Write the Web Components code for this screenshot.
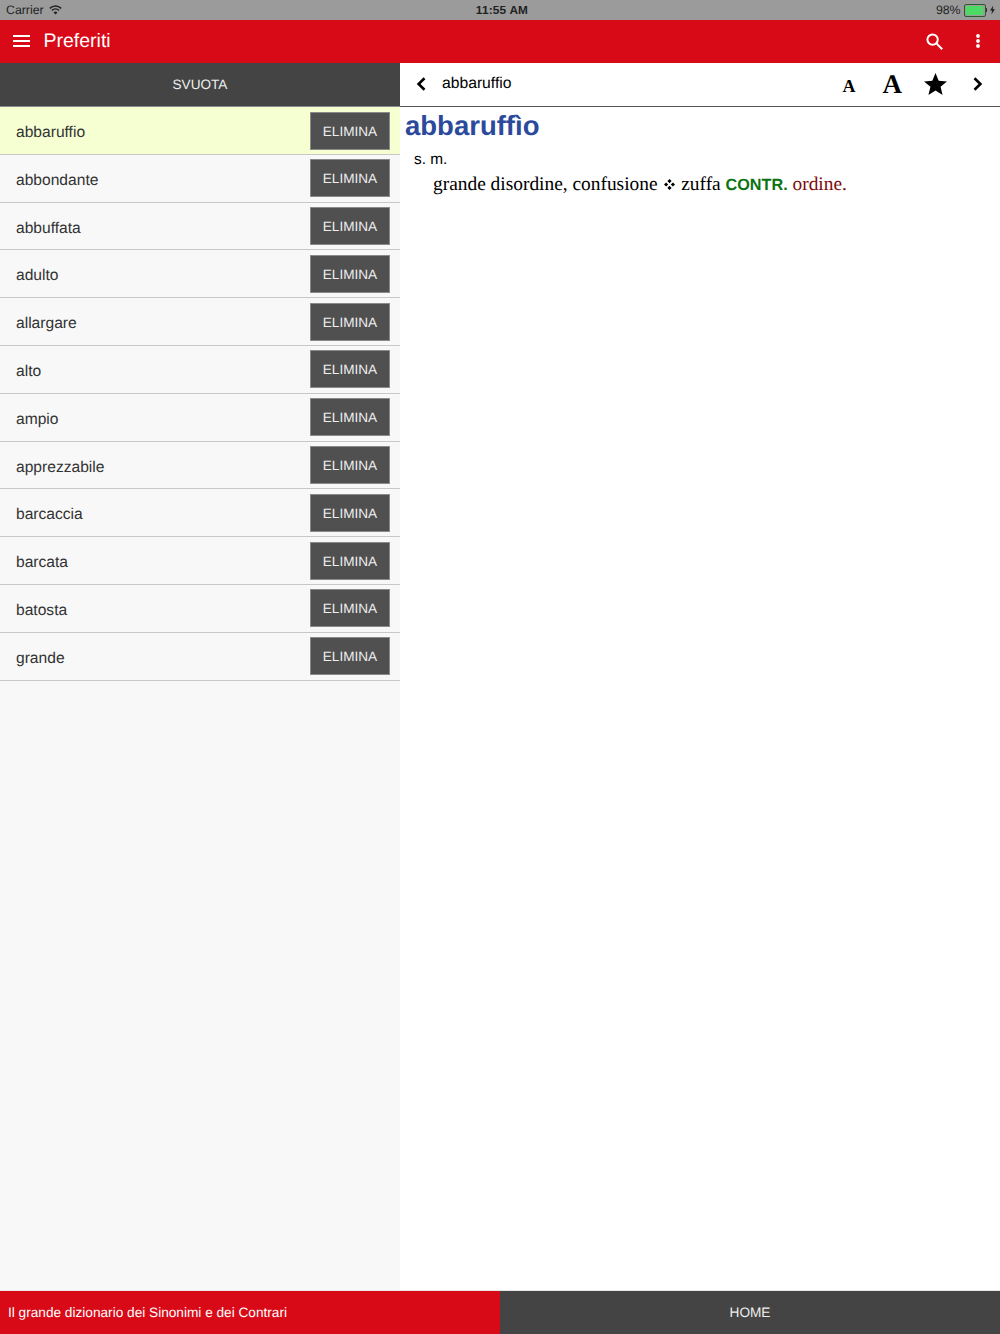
<!DOCTYPE html>
<html lang="it">
<head>
<meta charset="UTF-8">
<title>Preferiti</title>
<style>
  html, body { margin: 0; height: 100%; }
  body { font-family: "Liberation Sans", Arial, sans-serif; text-rendering: geometricPrecision; }
</style>
<script>
  function shadow(el, html) {
    el.attachShadow({ mode: 'open' }).innerHTML = html;
  }

  class StatusBar extends HTMLElement {
    connectedCallback() {
      shadow(this, `
        <style>
          :host { display: grid; grid-template-columns: 1fr auto 1fr; align-items: center; height: 20px; background: #9b9b9b; color: #222; font-size: 12.3px; padding: 0 5px 0 6px; box-sizing: border-box; }
          .l, .r { display: flex; align-items: center; }
          .l { gap: 5px; }
          .r { justify-content: flex-end; gap: 3px; }
          .t { font-weight: bold; font-size: 11.8px; letter-spacing: .2px; margin-left: 3px; }
          .bat { height: 9px; border: 1px solid #2c5a2c; border-radius: 2px; padding: 1px; box-sizing: content-box; display: block; width: 18px; }
          .bat i { display: block; height: 100%; width: 95%; background: #4cd964; border-radius: 1px; }
          .nub { width: 1.5px; height: 4px; background: #333; margin-left: -3px; }
        </style>
        <div class="l"><span>Carrier</span>
          <svg width="13" height="10" viewBox="0 0 13 10" fill="none" stroke="#222" stroke-width="1.5"><path d="M.8 3.4a8.2 8.2 0 0 1 11.4 0"/><path d="M2.9 5.5a5.2 5.2 0 0 1 7.2 0"/><path d="M6.5 9.6 4.5 7.4a2.8 2.8 0 0 1 4 0z" fill="#222" stroke="none"/></svg>
        </div>
        <div class="t">11:55 AM</div>
        <div class="r"><span>98%</span><span class="bat"><i></i></span><span class="nub"></span>
          <svg width="5" height="10" viewBox="0 0 6 10" fill="#222"><path d="M3.8 0 0 5.6h2.4L1.8 10 6 4.2H3.4z"/></svg>
        </div>`);
    }
  }
  customElements.define('status-bar', StatusBar);

  class AppToolbar extends HTMLElement {
    connectedCallback() {
      shadow(this, `
        <style>
          :host { display: flex; align-items: center; height: 43px; background: #d90a17; color: #fff; }
          .menu { margin-left: 13px; width: 17px; height: 14px; display: block; }
          h1 { margin: 0 0 0 13.5px; font-size: 19.5px; font-weight: normal; flex: 1; }
          .search { margin-right: 33px; }
          .more { margin-right: 20px; }
          svg { display: block; margin-bottom: 1px; }
        </style>
        <svg class="menu" viewBox="0 0 17 14" fill="#fff"><rect y="1" width="17" height="2"/><rect y="6" width="17" height="2"/><rect y="11" width="17" height="2"/></svg>
        <h1><slot></slot></h1>
        <svg class="search" width="17" height="17" viewBox="0 0 17 17" fill="none" stroke="#fff" stroke-width="2"><circle cx="6.6" cy="6.6" r="5.2"/><path d="m10.4 10.4 5.8 5.8"/></svg>
        <svg class="more" width="4" height="14" viewBox="0 0 4 14" fill="#fff"><circle cx="2" cy="2" r="1.9"/><circle cx="2" cy="7" r="1.9"/><circle cx="2" cy="12" r="1.9"/></svg>`);
    }
  }
  customElements.define('app-toolbar', AppToolbar);

  class FavRow extends HTMLElement {
    connectedCallback() {
      shadow(this, `
        <style>
          :host { display: flex; align-items: flex-start; height: 47.8px; box-sizing: border-box; border-bottom: 1px solid #c8c8c8; padding: 0 10px 0 16px; color: #333; font-size: 15.6px; background: #f8f8f8; }
          :host([active]) { background: #f6ffd2; }
          .w { flex: 1; margin-top: 17px; }
          button { width: 80px; height: 38px; margin-top: 4.5px; border: 1px solid #8a8a8a; background: #505050; color: #eee; font: 13.6px "Liberation Sans", Arial, sans-serif; padding: 1px 0 0; text-rendering: geometricPrecision; }
        </style>
        <span class="w"><slot></slot></span><button>ELIMINA</button>`);
    }
  }
  customElements.define('fav-row', FavRow);

  class FavList extends HTMLElement {
    connectedCallback() {
      shadow(this, `
        <style>
          :host { display: flex; flex-direction: column; width: 400px; background: #f8f8f8; }
          .clear { height: 44px; flex: none; display: flex; align-items: center; justify-content: center; background: #444; color: #eee; font-size: 13.6px; border-bottom: 1px solid #8a8a8a; box-sizing: border-box; }
        </style>
        <div class="clear">SVUOTA</div>
        <slot></slot>`);
    }
  }
  customElements.define('fav-list', FavList);

  class EntryPane extends HTMLElement {
    connectedCallback() {
      shadow(this, `
        <style>
          :host { display: flex; flex-direction: column; flex: 1; background: #fff; color: #000; }
          .bar { height: 44px; flex: none; display: flex; align-items: center; border-bottom: 1px solid #555; box-sizing: border-box; padding-bottom: 1px; }
          .back { margin-left: 16px; }
          .word { margin-left: 16px; font-size: 15.7px; flex: 1; }
          .a { font-family: "Liberation Serif", serif; font-weight: bold; line-height: 1; display: block; }
          .small { font-size: 18px; margin-right: 27px; padding-top: 4px; }
          .big { font-size: 27px; margin-right: 22px; }
          .star { margin-right: 26px; }
          .next { margin-right: 17px; }
          svg { display: block; }
          .body { flex: 1; }
          h2 { margin: 2px 0 0 5px; font-size: 27.5px; line-height: 34px; font-weight: bold; color: #2b4a9b; }
          .pos { margin: 7px 0 0 14px; font-size: 15.4px; line-height: 20px; }
          .def { margin: 3px 0 0 33px; font: 19.4px/24px "Liberation Serif", serif; }
          .contr { font: bold 16.2px "Liberation Sans", sans-serif; color: #0a7312; }
          .opp { color: #7c0c0c; }
          .sep { display: inline-block; vertical-align: 0; margin: 0 1.5px; }
        </style>
        <div class="bar">
          <svg class="back" width="10" height="14" viewBox="0 0 10 14" fill="none" stroke="#000" stroke-width="2.6"><path d="M8.5 1.2 2.6 7l5.9 5.8"/></svg>
          <span class="word">abbaruffio</span>
          <span class="a small">A</span>
          <span class="a big">A</span>
          <svg class="star" width="23" height="22" viewBox="0 0 24 23"><path d="M12 0l3.3 8.2 8.7.6-6.7 5.6 2.1 8.6L12 18.3l-7.4 4.7 2.1-8.6L0 8.8l8.7-.6z"/></svg>
          <svg class="next" width="10" height="14" viewBox="0 0 10 14" fill="none" stroke="#000" stroke-width="2.6"><path d="M1.5 1.2 7.4 7l-5.9 5.8"/></svg>
        </div>
        <div class="body">
          <h2>abbaruffìo</h2>
          <div class="pos">s. m.</div>
          <div class="def">grande disordine, confusione <svg class="sep" width="11" height="11" viewBox="0 0 11 11"><path d="M5.5 0 7.6 2.1 5.5 4.2 3.4 2.1zM5.5 6.8l2.1 2.1-2.1 2.1-2.1-2.1zM2.1 3.4l2.1 2.1-2.1 2.1L0 5.5zM8.9 3.4 11 5.5 8.9 7.6 6.8 5.5z"/></svg> zuffa <span class="contr">CONTR.</span> <span class="opp">ordine.</span></div>
        </div>`);
    }
  }
  customElements.define('entry-pane', EntryPane);

  class AppFooter extends HTMLElement {
    connectedCallback() {
      shadow(this, `
        <style>
          :host { display: flex; height: 44px; font-size: 13.65px; flex: none; border-top: 1px solid #e8e8e8; box-sizing: border-box; }
          div { width: 50%; display: flex; align-items: center; }
          .claim { background: #d90a17; color: #fff; padding-left: 8px; box-sizing: border-box; }
          .home { background: #444; color: #eee; justify-content: center; }
        </style>
        <div class="claim">Il grande dizionario dei Sinonimi e dei Contrari</div>
        <div class="home">HOME</div>`);
    }
  }
  customElements.define('app-footer', AppFooter);
</script>
</head>
<body>
  <div style="display:flex;flex-direction:column;height:1334px">
    <status-bar></status-bar>
    <app-toolbar>Preferiti</app-toolbar>
    <div style="display:flex;flex:1;min-height:0">
      <fav-list>
        <fav-row active>abbaruffio</fav-row>
        <fav-row>abbondante</fav-row>
        <fav-row>abbuffata</fav-row>
        <fav-row>adulto</fav-row>
        <fav-row>allargare</fav-row>
        <fav-row>alto</fav-row>
        <fav-row>ampio</fav-row>
        <fav-row>apprezzabile</fav-row>
        <fav-row>barcaccia</fav-row>
        <fav-row>barcata</fav-row>
        <fav-row>batosta</fav-row>
        <fav-row>grande</fav-row>
      </fav-list>
      <entry-pane></entry-pane>
    </div>
    <app-footer></app-footer>
  </div>
</body>
</html>
